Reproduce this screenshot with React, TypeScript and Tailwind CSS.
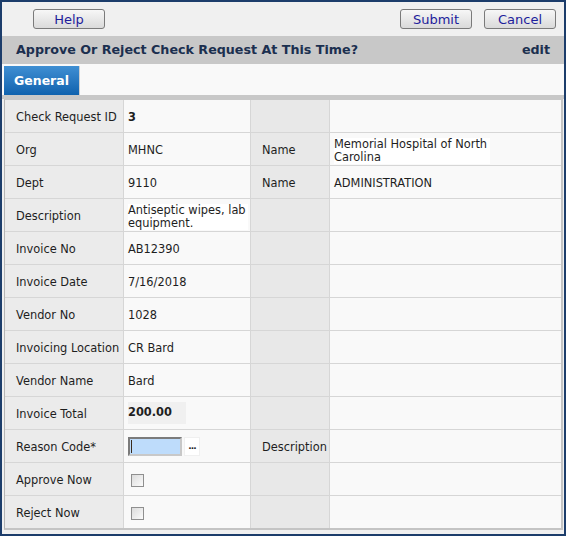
import React from "react";

type Row = {
  label: string;
  value?: React.ReactNode;
  label2?: string;
  value2?: React.ReactNode;
};

function Btn({ children, className = "" }: { children: React.ReactNode; className?: string }) {
  return (
    <button
      className={`h-[20px] w-[72px] rounded-[3px] border border-[#7a7a7a] bg-gradient-to-b from-[#f7f7f7] to-[#dadada] text-[13px] leading-none text-[#1d1d9c] font-['DejaVu_Sans',sans-serif] ${className}`}
    >
      {children}
    </button>
  );
}

function Checkbox() {
  return (
    <span className="ml-[3px] inline-block h-[13px] w-[13px] border border-[#8f8f8f] bg-gradient-to-br from-[#dcdcdc] to-[#fbfbfb]" />
  );
}

export default function App() {
  const rows: Row[] = [
    { label: "Check Request ID", value: <span className="font-bold">3</span> },
    {
      label: "Org",
      value: "MHNC",
      label2: "Name",
      value2: <span className="block w-[156px] bg-white leading-[13px]">Memorial Hospital of North Carolina</span>,
    },
    { label: "Dept", value: "9110", label2: "Name", value2: "ADMINISTRATION" },
    {
      label: "Description",
      value: <span className="block w-[120px] bg-white leading-[13px]">Antiseptic wipes, lab equipment.</span>,
    },
    { label: "Invoice No", value: "AB12390" },
    { label: "Invoice Date", value: "7/16/2018" },
    { label: "Vendor No", value: "1028" },
    { label: "Invoicing Location", value: "CR Bard" },
    { label: "Vendor Name", value: "Bard" },
    {
      label: "Invoice Total",
      value: <span className="-mt-[3px] inline-block w-[58px] bg-[#f0f0f0] py-[2px] font-bold">200.00</span>,
    },
    {
      label: "Reason Code*",
      value: (
        <span className="-mt-[3px] flex items-center gap-[2px]">
          <span className="flex h-[19px] w-[54px] items-center border-2 border-t-[#7b7b7b] border-l-[#7b7b7b] border-r-[#c8c8c8] border-b-[#c8c8c8] bg-[#bedcfb] pl-[1px]">
            <span className="h-[13px] w-px bg-[#3a2a1a]" />
          </span>
          <span className="flex h-[19px] w-[16px] items-center justify-center border border-[#f0f0f0] bg-white text-[9px] font-bold leading-none tracking-[-1px]">
            ...
          </span>
        </span>
      ),
      label2: "Description",
    },
    { label: "Approve Now", value: <span className="flex"><Checkbox /></span> },
    { label: "Reject Now", value: <span className="flex"><Checkbox /></span> },
  ];

  return (
    <div className="flex h-[536px] w-[566px] flex-col border-2 border-[#1c3d6b] bg-[#f0f0f0] font-['DejaVu_Sans',sans-serif] text-[11.4px] text-[#1e1e1e]">
      {/* toolbar */}
      <div className="flex h-[34px] shrink-0 items-center pl-[31px] pr-[8px]">
        <Btn>Help</Btn>
        <Btn className="ml-auto w-[71px]">Submit</Btn>
        <Btn className="ml-[12px]">Cancel</Btn>
      </div>

      {/* header */}
      <div className="flex h-[28px] shrink-0 items-center justify-between bg-[#c8c8c8] pl-[14px] pr-[14px] text-[12.7px] font-bold text-[#1b2f4f]">
        <span>Approve Or Reject Check Request At This Time?</span>
        <span>edit</span>
      </div>

      {/* tabs */}
      <div className="flex h-[31px] shrink-0 items-end bg-[#f9f9f9] pl-[2px]">
        <div className="flex h-[29px] w-[76px] items-center justify-center border-r border-[#d0d0d0] bg-gradient-to-b from-[#3f8fd3] to-[#0e62ae] pt-[1px] text-[12.5px] font-bold text-white">
          General
        </div>
      </div>
      <div className="h-[4px] shrink-0 bg-[#c8c8c8]" />

      {/* table */}
      <div className="pl-[2px] pr-[1px]">
        <div className="grid grid-cols-[118px_126px_78px_1fr] gap-px border-t border-l border-r-2 border-b-2 border-t-[#c8c8c8] border-l-[#b4b4b4] border-r-[#c4c4c4] border-b-[#c4c4c4] bg-[#d6d6d6]">
          {rows.map((r) => (
            <React.Fragment key={r.label}>
              <div className="flex h-[32px] items-center bg-[#ebebeb] pl-[11px] pt-[3px]">{r.label}</div>
              <div className="flex h-[32px] items-center bg-[#f9f9f9] pl-[4px] pt-[3px]">{r.value}</div>
              <div className="flex h-[32px] items-center bg-[#e8e8e8] pl-[11px] pt-[3px]">{r.label2}</div>
              <div className="flex h-[32px] items-center bg-[#f9f9f9] pl-[4px] pt-[3px]">{r.value2}</div>
            </React.Fragment>
          ))}
        </div>
      </div>
    </div>
  );
}
